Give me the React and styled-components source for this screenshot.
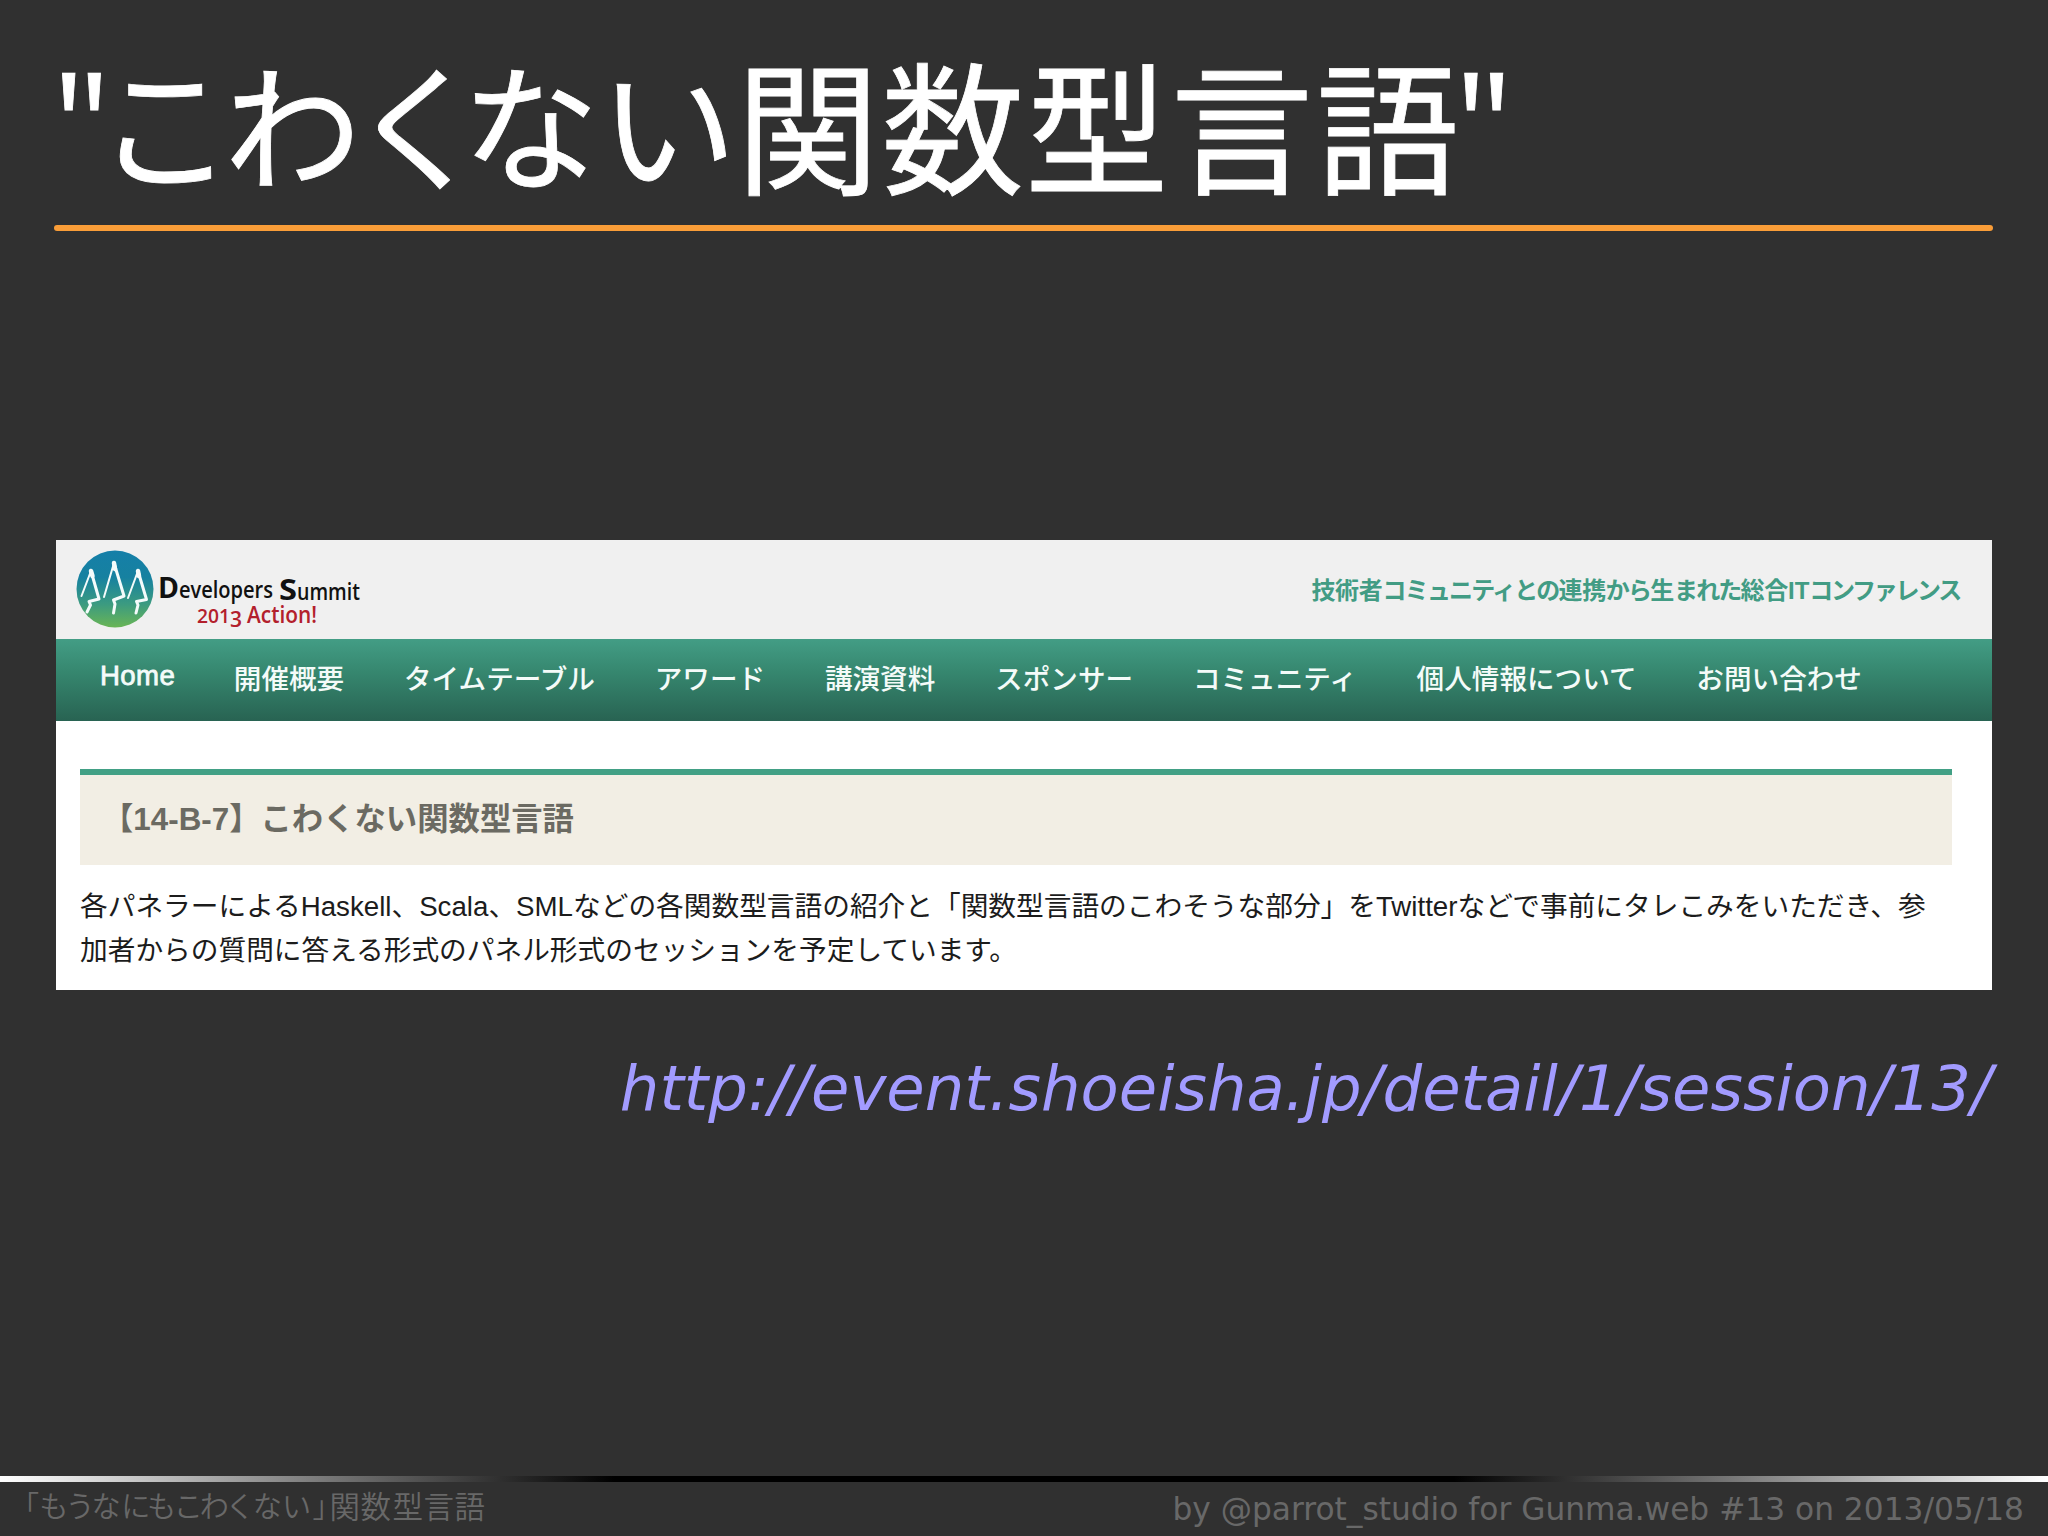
import styled, { createGlobalStyle } from 'styled-components'

// [text, letter spacing, kind]
const TITLE = [
    ['"', -13.5, 'quote'], ['こ', -9, 'kana'], ['わ', -11, 'kana'], ['く', -25, 'kana'],
    ['な', 1, 'kana'], ['い', -0.5, 'kana'], ['関', 2], ['数', 1], ['型', 2], ['言', 3],
    ['語', -4], ['"', 0, 'quote'],
];

const FOOTER = [
    ['「', 0, 'kana'], ['も', -3, 'kana'], ['う', -3, 'kana'], ['な', 0.5, 'kana'],
    ['に', -3.5, 'kana'], ['も', -2.5, 'kana'], ['こ', -3, 'kana'], ['わ', -3.5, 'kana'],
    ['く', -2, 'kana'], ['な', 0, 'kana'], ['い', 1.5, 'kana'], ['」', -12.2, 'kana'],
    ['関', 0.5], ['数', 1.5], ['型', 0.5], ['言', 0.5], ['語', 0],
];

const TAGLINE = [
    ['技術者', -0.3], ['コミュニティとの', -1.8], ['連携', -0.3], ['から', -1.8], ['生', -0.3],
    ['まれた', -1.8], ['総合', -0.3], ['IT', 0], ['コンファレンス', -2.3],
];

const NAV = [
    '開催概要', 'タイムテーブル', 'アワード', '講演資料', 'スポンサー',
    'コミュニティ', '個人情報について', 'お問い合わせ',
];

const Kerned = ({ runs }) => runs.map(([text, spacing, kind], i) => (
    <Run key={i} $spacing={spacing} $kind={kind}>{text}</Run>
));

const Logo = () => (
    <LogoSvg viewBox="0 0 300 90">
        <defs>
            <linearGradient id="sky" x1="0" y1="0" x2="0" y2="1">
                <stop offset="0" stopColor="#157fa8" />
                <stop offset="0.35" stopColor="#1681a0" />
                <stop offset="0.7" stopColor="#3c9b80" />
                <stop offset="1" stopColor="#69b555" />
            </linearGradient>
        </defs>
        <circle cx="39" cy="44" r="38.5" fill="url(#sky)" />
        <g fill="none" stroke="#f4fbfb" strokeLinejoin="round" strokeLinecap="round">
            <path strokeWidth="2" d="M15 26 L5.5 51 M38 18 L28 52 M62 26 L52 53" />
            <path strokeWidth="3" d="M15 26 L23 54 L13 56.5 L14.5 60 L11 67 M38 18 L48 51 L37.5 55 L39 59 L37.5 68 M62 26 L70.5 54.5 L60.5 56.5 L62 60 L60 68" />
            <path strokeWidth="4.5" d="M15 26 L16.5 31 M38 18 L39 24 M62 26 L63 31" />
        </g>
        <LogoWord x="82" y="53" fontSize="29" textLength="21" lengthAdjust="spacingAndGlyphs">D</LogoWord>
        <LogoWord $light x="103" y="53" fontSize="23.5" textLength="94" lengthAdjust="spacingAndGlyphs">evelopers</LogoWord>
        <LogoWord x="203" y="55" fontSize="29" textLength="18" lengthAdjust="spacingAndGlyphs">S</LogoWord>
        <LogoWord $light x="221" y="55" fontSize="23.5" textLength="63" lengthAdjust="spacingAndGlyphs">ummit</LogoWord>
        <LogoWord $light $red x="121" y="78" fontSize="19.5" textLength="33" lengthAdjust="spacingAndGlyphs">201</LogoWord>
        <LogoWord $light $red x="154" y="82" fontSize="21">3</LogoWord>
        <LogoWord $light $red x="171" y="78" fontSize="22.5" textLength="70" lengthAdjust="spacingAndGlyphs">Action!</LogoWord>
    </LogoSvg>
);

const App = () => {
    return (
        <Slide>
            <GlobalStyle />
            <Title><Kerned runs={TITLE} /></Title>
            <Rule />
            <Panel>
                <Header>
                    <Logo />
                    <Tagline><Kerned runs={TAGLINE} /></Tagline>
                </Header>
                <Nav>
                    <NavHome>Home</NavHome>
                    {NAV.map((label) => <NavItem key={label}>{label}</NavItem>)}
                </Nav>
                <Content>
                    <Session>【14-B-7】こわくない関数型言語</Session>
                    <Description>
                        各パネラーによるHaskell、Scala、SMLなどの各関数型言語の紹介と「関数型言語のこわそうな部分」をTwitterなどで事前にタレこみをいただき、参
                        <br />
                        加者からの質問に答える形式のパネル形式のセッションを予定しています。
                    </Description>
                </Content>
            </Panel>
            <Link>http://event.shoeisha.jp/detail/1/session/13/</Link>
            <Spacer />
            <FadeBar />
            <Footer>
                <FooterTitle><Kerned runs={FOOTER} /></FooterTitle>
                <Credit>by @parrot_studio for Gunma.web #13 on 2013/05/18</Credit>
            </Footer>
        </Slide>
    )
}

const GlobalStyle = createGlobalStyle`
    body {
        margin: 0;
        background: #303030;
    }
    * {
        box-sizing: border-box;
    }
`;

const Slide = styled.main`
    display: flex;
    flex-direction: column;
    width: 2048px;
    height: 1536px;
    overflow: hidden;
    background: #303030;
    font-family: "Liberation Sans", "Noto Sans CJK JP", sans-serif;
`;

const Title = styled.h1`
    height: 225px;
    margin: 0;
    padding: 24px 0 0 53px;
    color: #fff;
    font-family: "Noto Sans CJK JP", sans-serif;
    font-size: 143px;
    font-weight: 400;
    line-height: 196px;
    white-space: nowrap;
    -webkit-text-stroke: 0.8px #fff;
`;

const KINDS = {
    kana: 'font-size: 0.957em; vertical-align: 0.028em;',
    quote: 'font-size: 1em; vertical-align: 0.06em; font-family: "Open Sans", sans-serif;',
};

// kana sit a little smaller and higher than the kanji around them
const Run = styled.span`
    letter-spacing: ${(p) => p.$spacing}px;
    line-height: 1;
    ${(p) => KINDS[p.$kind]}
`;

const Rule = styled.div`
    flex: none;
    width: 1939px;
    height: 6px;
    margin-left: 54px;
    border-radius: 3px;
    background: #f99d38;
`;

const Panel = styled.section`
    flex: none;
    display: flex;
    flex-direction: column;
    width: 1936px;
    height: 450px;
    margin: 309px 0 0 56px;
    background: #fff;
`;

const Header = styled.header`
    display: flex;
    align-items: center;
    justify-content: space-between;
    height: 99px;
    padding: 0 32px 0 20px;
    background: #f0f0f0;
`;

const LogoSvg = styled.svg`
    width: 300px;
    height: 90px;
`;

const LogoWord = styled.text`
    fill: ${(p) => (p.$red ? '#b3202c' : '#111')};
    font-family: "Open Sans", sans-serif;
    font-weight: ${(p) => (p.$light ? 600 : 700)};
`;

const Tagline = styled.p`
    margin: 3px 0 0;
    color: #429c84;
    font-size: 24px;
    font-weight: 700;
    line-height: 36px;
`;

const Nav = styled.nav`
    display: flex;
    align-items: center;
    gap: 59.8px;
    height: 82px;
    padding: 0 0 1px 44px;
    background: linear-gradient(#439d85, #36876f 40%, #286352);
    color: #f4fbf9;
    font-size: 27.6px;
    font-weight: 500;
    white-space: nowrap;
`;

const NavItem = styled.span`
    line-height: 40px;
`;

const NavHome = styled(NavItem)`
    width: 74px;
    margin-bottom: 7px;
    letter-spacing: 0.4px;
    -webkit-text-stroke: 0.8px #f4fbf9;
`;

const Content = styled.div`
    padding: 48px 40px 0 24px;
`;

const Session = styled.h2`
    height: 96px;
    margin: 0;
    padding-left: 22px;
    border-top: 6px solid #42a085;
    background: #f2eee4;
    color: #6b6a62;
    font-size: 31.35px;
    font-weight: 700;
    line-height: 90px;
`;

const Description = styled.p`
    margin: 20px 0 0;
    color: #1c1c1c;
    font-size: 27.7px;
    line-height: 43.6px;
    white-space: nowrap;
`;

const Link = styled.a`
    align-self: flex-end;
    margin: 62px 56px 0 0;
    color: #a29bff;
    font-family: "DejaVu Sans", sans-serif;
    font-size: 62.4px;
    font-style: italic;
    line-height: 73px;
`;

const Spacer = styled.div`
    flex: 1;
`;

const FadeBar = styled.div`
    flex: none;
    height: 6px;
    background: linear-gradient(90deg, #fff, #000 30%, #000 71%, #fff);
`;

const Footer = styled.footer`
    display: flex;
    flex: none;
    justify-content: space-between;
    height: 54px;
    padding: 0 24px 0 10px;
    color: #686868;
    font-size: 31.25px;
    white-space: nowrap;
`;

const FooterTitle = styled.span`
    font-family: "Noto Sans CJK JP", sans-serif;
    font-size: 30.5px;
    font-weight: 350;
    line-height: 46px;
`;

const Credit = styled.span`
    font-family: "DejaVu Sans", sans-serif;
    line-height: 54px;
`;

export default App;
